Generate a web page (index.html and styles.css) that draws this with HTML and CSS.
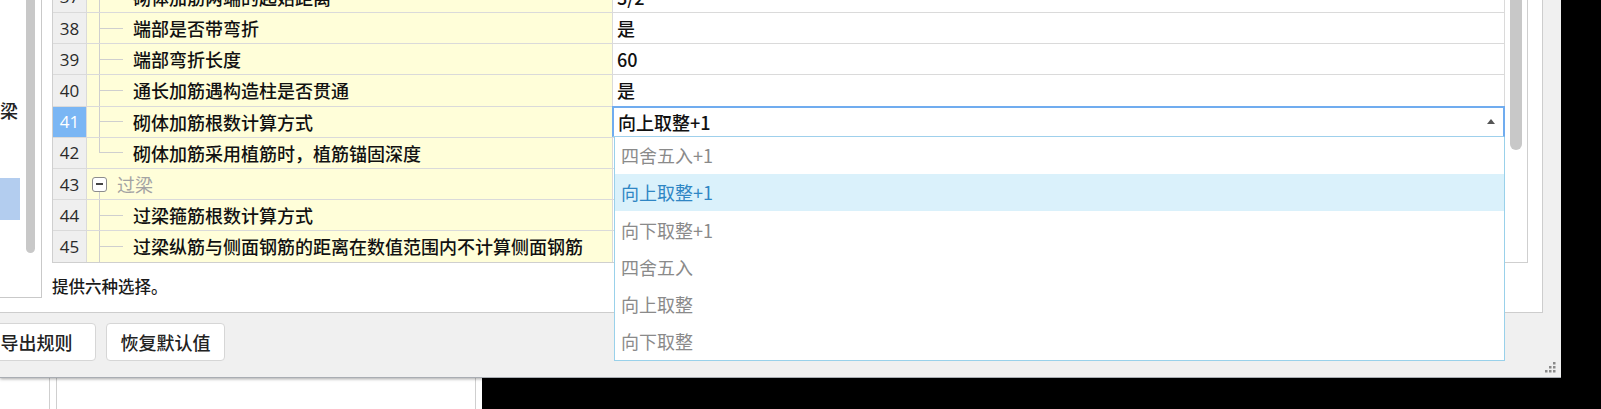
FILE: index.html
```html
<!DOCTYPE html>
<html lang="zh-CN">
<head>
<meta charset="utf-8">
<title>规则设置</title>
<link rel="stylesheet" href="styles.css">
</head>
<body>
<div class="dialog">
  <div class="main">
    <div class="side">
      <div class="side-list">
        <div class="side-text">框架梁</div>
        <div class="side-sel"></div>
      </div>
      <div class="side-track"><div class="side-thumb"></div></div>
    </div>
    <div class="content">
      <div class="grid-box">
        <div class="grid">
          <div class="row">
            <div class="num">37</div>
            <div class="name"><span class="tree"></span><span class="label">砌体加筋两端的起始距离</span></div>
            <div class="val">3/2</div>
          </div>
          <div class="row">
            <div class="num">38</div>
            <div class="name"><span class="tree"></span><span class="label">端部是否带弯折</span></div>
            <div class="val">是</div>
          </div>
          <div class="row">
            <div class="num">39</div>
            <div class="name"><span class="tree"></span><span class="label">端部弯折长度</span></div>
            <div class="val">60</div>
          </div>
          <div class="row">
            <div class="num">40</div>
            <div class="name"><span class="tree"></span><span class="label">通长加筋遇构造柱是否贯通</span></div>
            <div class="val">是</div>
          </div>
          <div class="row">
            <div class="num num-sel">41</div>
            <div class="name"><span class="tree"></span><span class="label">砌体加筋根数计算方式</span></div>
            <div class="val val-edit">
              <div class="combo">
                <div class="combo-input"><span>向上取整+1</span><span class="combo-arrow"></span></div>
                <div class="combo-list">
                  <div class="combo-item">四舍五入+1</div>
                  <div class="combo-item combo-item-hl">向上取整+1</div>
                  <div class="combo-item">向下取整+1</div>
                  <div class="combo-item">四舍五入</div>
                  <div class="combo-item">向上取整</div>
                  <div class="combo-item">向下取整</div>
                </div>
              </div>
            </div>
          </div>
          <div class="row">
            <div class="num">42</div>
            <div class="name"><span class="tree tree-end"></span><span class="label">砌体加筋采用植筋时，植筋锚固深度</span></div>
            <div class="val"></div>
          </div>
          <div class="row">
            <div class="num">43</div>
            <div class="name"><span class="gtree"><span class="box"><span class="minus"></span></span></span><span class="label label-group">过梁</span></div>
            <div class="val"></div>
          </div>
          <div class="row">
            <div class="num">44</div>
            <div class="name"><span class="tree"></span><span class="label">过梁箍筋根数计算方式</span></div>
            <div class="val"></div>
          </div>
          <div class="row row-last">
            <div class="num">45</div>
            <div class="name"><span class="tree"></span><span class="label">过梁纵筋与侧面钢筋的距离在数值范围内不计算侧面钢筋</span></div>
            <div class="val"></div>
          </div>
        </div>
        <div class="vscroll"><div class="vthumb"></div></div>
      </div>
      <div class="desc">提供六种选择。</div>
    </div>
  </div>
  <div class="toolbar">
    <button class="btn btn-first">导出规则</button>
    <button class="btn">恢复默认值</button>
    <svg class="grip" width="13" height="13" viewBox="0 0 13 13">
      <rect x="10" y="1" width="2.5" height="2.5" fill="#8a8a8a"/>
      <rect x="6" y="5" width="2.5" height="2.5" fill="#8a8a8a"/>
      <rect x="10" y="5" width="2.5" height="2.5" fill="#8a8a8a"/>
      <rect x="2" y="9" width="2.5" height="2.5" fill="#8a8a8a"/>
      <rect x="6" y="9" width="2.5" height="2.5" fill="#8a8a8a"/>
      <rect x="10" y="9" width="2.5" height="2.5" fill="#8a8a8a"/>
    </svg>
  </div>
</div>
<div class="under">
  <div class="under-a"></div>
  <div class="under-b"></div>
  <div class="under-c"></div>
  <div class="under-d"></div>
</div>
</body>
</html>
```

FILE: styles.css
```css
* { box-sizing: border-box; }
html, body { margin: 0; padding: 0; }
body {
  background: #000;
  width: 1601px;
  height: 409px;
  overflow: hidden;
  font-family: "Noto Sans CJK SC", "Microsoft YaHei", sans-serif;
  font-weight: 500;
  color: #1a1a1a;
}

.dialog {
  width: 1561px;
  height: 378px;
  background: #f0f0f0;
  border-bottom: 1px solid #a9adb3;
  display: flex;
  flex-direction: column;
  box-shadow: 0 1px 3px rgba(0, 0, 0, 0.35);
  position: relative;
  z-index: 2;
}

.main {
  flex: none;
  width: 1543px;
  height: 313px;
  background: #fff;
  border-right: 1px solid #cdcdcd;
  border-bottom: 1px solid #cdcdcd;
  display: flex;
  align-items: flex-start;
}

/* left tree panel */
.side {
  flex: none;
  width: 42px;
  height: 298px;
  border-right: 1px solid #c9c9c9;
  border-bottom: 1px solid #c9c9c9;
  display: flex;
  overflow: hidden;
}
.side-list {
  width: 26px;
  flex: none;
  display: flex;
  flex-direction: column;
  align-items: flex-end;
  overflow: hidden;
}
.side-text {
  margin-top: 89px;
  height: 42px;
  line-height: 42px;
  font-size: 18px;
  white-space: nowrap;
  color: #222;
  margin-right: 8px;
}
.side-sel {
  align-self: flex-start;
  margin-top: 47px;
  width: 20px;
  height: 42px;
  background: #b3cdef;
}
.side-track { width: 9px; flex: none; }
.side-thumb {
  height: 253px;
  background: #c8c8c8;
  border-radius: 0 0 5px 5px;
}

/* grid */
.content {
  margin-left: 10px;
  width: 1476px;
  flex: none;
  display: flex;
  flex-direction: column;
}
.grid-box {
  margin-top: -18.2px;
  display: flex;
  border: 1px solid #cfcfcf;
  border-top: none;
}
.grid { width: 1452px; flex: none; }
.row {
  display: flex;
  height: 31.2px;
  border-bottom: 1px solid #dadada;
}
.row-last { height: 30.2px; border-bottom: none; }

.num {
  flex: none;
  width: 34px;
  border-right: 1px solid #dadada;
  background: #efefef;
  font-family: "Open Sans", "Noto Sans", sans-serif;
  font-weight: 400;
  font-size: 17px;
  color: #2a2a2a;
  display: flex;
  align-items: center;
  justify-content: center;
}
.num-sel { background: #7ab6f4; color: #fff; }

.name {
  flex: none;
  width: 526px;
  border-right: 1px solid #dadada;
  background: #fffed9;
  display: flex;
  align-items: stretch;
  overflow: hidden;
}
.tree {
  flex: none;
  width: 36px;
  background:
    linear-gradient(#cfcfcf, #cfcfcf) 12px 0 / 1px 100% no-repeat,
    linear-gradient(#cfcfcf, #cfcfcf) 12px 50% / 24px 1px no-repeat;
}
.tree-end {
  background:
    linear-gradient(#cfcfcf, #cfcfcf) 12px 0 / 1px 50% no-repeat,
    linear-gradient(#cfcfcf, #cfcfcf) 12px 50% / 24px 1px no-repeat;
}
.gtree {
  flex: none;
  width: 26px;
  padding-left: 5px;
  display: flex;
  align-items: center;
  background: linear-gradient(#cfcfcf, #cfcfcf) 12px 100% / 1px 50% no-repeat;
}
.box {
  width: 15px;
  height: 15px;
  border: 1px solid #8c8c8c;
  border-radius: 3px;
  background: #fff;
  display: flex;
  align-items: center;
  justify-content: center;
}
.minus { width: 7px; height: 2px; background: #444; }

.label {
  margin-left: 10px;
  align-self: center;
  font-size: 18px;
  line-height: 24px;
  color: #111;
  white-space: nowrap;
}
.label-group { margin-left: 4px; color: #a3a3a3; font-weight: 400; }

.val {
  flex: none;
  width: 892px;
  border-right: 1px solid #dadada;
  padding-left: 4px;
  display: flex;
  align-items: center;
  font-size: 18px;
  line-height: 24px;
  color: #111;
}
.val-edit { position: relative; }

/* combo box overlay */
.combo {
  position: absolute;
  left: -1px;
  top: -1px;
  width: 893px;
  z-index: 10;
}
.combo-input {
  height: 31px;
  background: #fff;
  border: 2px solid #70acef;
  border-bottom: 1px solid #9fd0ec;
  padding-left: 4px;
  padding-right: 8px;
  display: flex;
  align-items: center;
  justify-content: space-between;
  font-size: 18px;
  line-height: 24px;
  color: #111;
}
.combo-arrow {
  width: 0;
  height: 0;
  border-left: 4px solid transparent;
  border-right: 4px solid transparent;
  border-bottom: 5px solid #555;
}
.combo-list {
  margin-left: 2px;
  width: 891px;
  background: #fff;
  border: 1px solid #99d1ea;
  border-top: none;
}
.combo-item {
  height: 37.2px;
  padding-left: 6px;
  display: flex;
  align-items: center;
  font-size: 18px;
  line-height: 24px;
  font-weight: 400;
  color: #8a8a8a;
}
.combo-item-hl { background: #daf1fb; color: #2f86c4; }

.vscroll { width: 22px; flex: none; }
.vthumb {
  margin-left: 5px;
  width: 12px;
  height: 168px;
  background: #c8c8c8;
  border-radius: 0 0 6px 6px;
}

.desc {
  margin-top: 11px;
  font-size: 16.5px;
  line-height: 24px;
  color: #1a1a1a;
}

/* bottom toolbar */
.toolbar {
  flex: 1;
  display: flex;
  align-items: flex-start;
  gap: 10px;
  padding-top: 10px;
}
.btn {
  flex: none;
  width: 119px;
  height: 38px;
  padding: 0;
  background: #fff;
  border: 1px solid #d6d6d6;
  border-radius: 4px;
  font-family: "Noto Sans CJK SC", "Microsoft YaHei", sans-serif;
  font-weight: 500;
  font-size: 18px;
  color: #222;
}
.btn-first { margin-left: -23px; }
.grip {
  margin-left: auto;
  align-self: flex-end;
  margin-right: 5px;
  margin-bottom: 3px;
}

/* window behind */
.under {
  display: flex;
  width: 482px;
  height: 31px;
  background: #fff;
}
.under-a { width: 50px; border-right: 1px solid #cfcfcf; }
.under-b { width: 7px; border-right: 1px solid #cfcfcf; }
.under-c { width: 419px; border-right: 1px solid #cfcfcf; }
.under-d { width: 6px; }
```
